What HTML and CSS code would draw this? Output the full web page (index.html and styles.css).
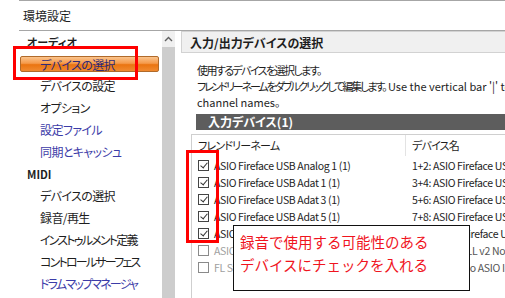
FILE: index.html
```html
<!DOCTYPE html>
<html lang="ja">
<head>
    <meta charset="UTF-8">
    <title>環境設定</title>
    <link rel="stylesheet" href="styles.css">
</head>
<body>
    <div class="window">
        <div class="titlebar">環境設定</div>

        <div class="main">
            <!-- 左のツリー -->
            <div class="sidebar">
                <div class="group">オーディオ</div>
                <div class="item selected"><span>デバイスの選択</span></div>
                <div class="item">デバイスの設定</div>
                <div class="item">オプション</div>
                <div class="item link">設定ファイル</div>
                <div class="item link">同期とキャッシュ</div>
                <div class="group">MIDI</div>
                <div class="item">デバイスの選択</div>
                <div class="item">録音/再生</div>
                <div class="item kana">インストゥルメント定義</div>
                <div class="item kana">コントロールサーフェス</div>
                <div class="item link kana">ドラムマップマネージャ</div>
            </div>
            <div class="scrollbar">
                <div class="arrow">
                    <svg width="9" height="6" viewBox="0 0 9 6"><polyline points="1,5 4.5,1.5 8,5" fill="none" stroke="#606060" stroke-width="1.4"/></svg>
                </div>
                <div class="thumb"></div>
            </div>

            <!-- 右の内容 -->
            <div class="content">
                <div class="page-title">入力/出力デバイスの選択</div>
                <p class="desc">
                    <span class="ja">使用するデバイスを選択します。</span><br>
                    <span class="ja tight">フレンドリーネームをダブルクリックして編集します。</span> Use the vertical bar '|' to separate<br>
                    channel names。
                </p>
                <div class="section">入力デバイス(1)</div>
                <div class="table">
                    <div class="row head">
                        <div class="col-name">フレンドリーネーム</div>
                        <div class="col-dev">デバイス名</div>
                    </div>
                    <div class="row">
                        <div class="col-name"><span class="cb on"></span>ASIO Fireface USB Analog 1 (1)</div>
                        <div class="col-dev">1+2: ASIO Fireface USB Analog 1</div>
                    </div>
                    <div class="row">
                        <div class="col-name"><span class="cb on"></span>ASIO Fireface USB Adat 1 (1)</div>
                        <div class="col-dev">3+4: ASIO Fireface USB Adat 1</div>
                    </div>
                    <div class="row">
                        <div class="col-name"><span class="cb on"></span>ASIO Fireface USB Adat 3 (1)</div>
                        <div class="col-dev">5+6: ASIO Fireface USB Adat 3</div>
                    </div>
                    <div class="row">
                        <div class="col-name"><span class="cb on"></span>ASIO Fireface USB Adat 5 (1)</div>
                        <div class="col-dev">7+8: ASIO Fireface USB Adat 5</div>
                    </div>
                    <div class="row">
                        <div class="col-name"><span class="cb on"></span>ASIO Fireface USB Adat 7 (1)</div>
                        <div class="col-dev">9+10: ASIO Fireface USB Adat 7</div>
                    </div>
                    <div class="row off">
                        <div class="col-name"><span class="cb"></span>ASIO4ALL v2 (1)</div>
                        <div class="col-dev">1+2: ASIO4ALL v2 Non</div>
                    </div>
                    <div class="row off">
                        <div class="col-name"><span class="cb"></span>FL Studio ASIO (1)</div>
                        <div class="col-dev">1+2: FL Studio ASIO In</div>
                    </div>
                </div>
            </div>
        </div>

        <!-- 注釈 -->
        <div class="mark mark-menu"></div>
        <div class="mark mark-check"></div>
        <div class="note">
            録音で使用する可能性のある<br>
            デバイスにチェックを入れる
        </div>
    </div>
</body>
</html>
```
FILE: styles.css
```css
body {
    margin: 0;
    background: #fff;
    font-family: "Noto Sans CJK JP", sans-serif;
    font-size: 12px;
    color: #1e1e1e;
    font-feature-settings: "palt";
}

.window {
    position: relative;
    width: 505px;
    height: 298px;
    overflow: hidden;
}

.titlebar {
    margin-left: 19px;
    padding-left: 4px;
    height: 31px;
    line-height: 29px;
    border-top: 1px solid #a6a6a6;
    border-bottom: 1px solid #a6a6a6;
    box-sizing: border-box;
}

.main {
    display: flex;
    height: 267px;
}

/* 左のツリー */
.sidebar {
    flex-shrink: 0;
    width: 143px;
    margin-left: 19px;
    white-space: nowrap;
    letter-spacing: -0.6px;
}
.group {
    height: 22px;
    line-height: 22px;
    padding-left: 8px;
    font-weight: bold;
    font-size: 11px;
    letter-spacing: 0;
}
.item {
    height: 22px;
    line-height: 22px;
    padding-left: 21px;
}
.item.kana {
    letter-spacing: -1.8px;
}
.item.link {
    color: #3c3ca8;
}
.item.selected {
    padding: 3px 3px 3px 1px;
    box-sizing: border-box;
}
.item.selected span {
    display: block;
    height: 16px;
    line-height: 15px;
    padding-left: 19px;
    border: 1px solid #b06a2a;
    box-sizing: border-box;
    border-radius: 2px;
    color: #2f2a78;
    background: linear-gradient(#fbc48c, #f59a4a 45%, #ea7410 55%, #f08a30);
}

.scrollbar {
    flex-shrink: 0;
    width: 13px;
    background: #cdcdcd;
    margin-right: 6px;
}
.scrollbar .arrow {
    height: 16px;
    background: #f0f0f0;
    display: flex;
    align-items: center;
    justify-content: center;
}

/* 右の内容 */
.content {
    flex: 1;
    min-width: 0;
    overflow: hidden;
}
.page-title {
    height: 22px;
    line-height: 21px;
    padding-left: 8px;
    background: #f0f0f0;
    border: 1px solid #d2d2d2;
    border-right: none;
    box-sizing: border-box;
    font-weight: bold;
}
.desc {
    margin: 9px 0 0 16px;
    line-height: 16px;
    font-size: 11px;
    white-space: nowrap;
}
.desc .ja {
    letter-spacing: -1.6px;
}
.desc .ja.tight {
    letter-spacing: -2.1px;
}
.section {
    margin: 4px 0 0 15px;
    height: 16px;
    line-height: 16px;
    padding-left: 12px;
    background: #5d5d5d;
    color: #fff;
    font-weight: bold;
}
.table {
    margin: 4px 0 0 10px;
    border-left: 1px solid #cfcfcf;
    border-top: 1px solid #cfcfcf;
    height: 200px;
    font-size: 10.5px;
}
.row {
    display: flex;
    height: 17px;
    line-height: 17px;
    white-space: nowrap;
    letter-spacing: -0.35px;
}
.row.head {
    height: 21px;
    line-height: 21px;
    margin-bottom: 1px;
    font-size: 11px;
    letter-spacing: -0.8px;
}
.row.head .col-dev {
    border-left: 1px solid #e3e3e3;
    padding-left: 6px;
}
.col-name {
    flex-shrink: 0;
    width: 213px;
    padding-left: 6px;
    box-sizing: border-box;
    display: flex;
    align-items: center;
}
.col-dev {
    padding-left: 7px;
}
.row.off .col-name {
    color: #a0a0a0;
}
.row.off .col-dev {
    color: #555;
}

.cb {
    flex-shrink: 0;
    width: 11px;
    height: 11px;
    border: 1px solid #444;
    box-sizing: border-box;
    margin-right: 5px;
    position: relative;
}
.row.off .cb {
    border-color: #8a8a8a;
}
.cb.on::after {
    content: "";
    position: absolute;
    left: 3px;
    top: 0px;
    width: 3px;
    height: 6px;
    border-right: 1.3px solid #333;
    border-bottom: 1.3px solid #333;
    transform: rotate(40deg);
}

/* 注釈 */
.mark {
    position: absolute;
    border: 3px solid #f00;
    box-sizing: border-box;
}
.mark-menu {
    left: 13px;
    top: 46px;
    width: 125px;
    height: 34px;
}
.mark-check {
    left: 186px;
    top: 150px;
    width: 33px;
    height: 93px;
}
.note {
    position: absolute;
    left: 233px;
    top: 225px;
    width: 237px;
    height: 66px;
    box-sizing: border-box;
    border: 1px solid #111;
    background: #fff;
    padding: 4px 0 0 6px;
    color: #f0141e;
    font-size: 14.5px;
    line-height: 23px;
    font-feature-settings: normal;
}
```
